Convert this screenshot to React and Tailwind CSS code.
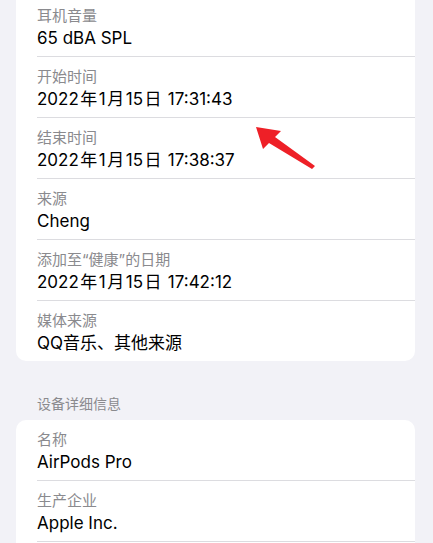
import React from "react";

const sample = [
  { label: "耳机音量", value: "65 dBA SPL" },
  { label: "开始时间", value: "2022年1月15日 17:31:43", date: true },
  { label: "结束时间", value: "2022年1月15日 17:38:37", date: true },
  { label: "来源", value: "Cheng" },
  { label: "添加至“健康”的日期", value: "2022年1月15日 17:42:12", date: true },
  { label: "媒体来源", value: "QQ音乐、其他来源" },
];

const device = [
  { label: "名称", value: "AirPods Pro" },
  { label: "生产企业", value: "Apple Inc." },
];

// iOS puts a little air between CJK and digits in dates
const spaced = (text) =>
  text.split(/([年月日])/).map((part, i) =>
    /[年月日]/.test(part) ? (
      <span key={i} className="px-[1.5px]">
        {part}
      </span>
    ) : (
      part
    )
  );

const Row = ({ label, value, date, last }) => (
  <div className="pl-[21px]">
    <div
      className={
        "pt-[10px] pb-[6px] " + (last ? "" : "border-b border-[#dcdce0]")
      }
    >
      <div className="text-[15px] leading-[20px] text-[#8a8a8e]">{label}</div>
      <div className="text-[17px] leading-[24px] text-black">
        {date ? spaced(value) : value}
      </div>
    </div>
  </div>
);

const App = () => {
  return (
    <div
      className="relative h-[543px] w-[433px] overflow-hidden bg-[#f2f2f7]"
      style={{ fontFamily: 'Inter, "Noto Sans CJK SC", sans-serif' }}
    >
      <div className="ml-[16px] mr-[18px] -mt-[4px] rounded-b-[10px] bg-white">
        {sample.map((r, i) => (
          <Row key={r.label} {...r} last={i === sample.length - 1} />
        ))}
      </div>

      <div className="pl-[37px] pt-[34px] pb-[7px] text-[14px] leading-[18px] text-[#8a8a8e]">
        设备详细信息
      </div>

      <div className="ml-[16px] mr-[18px] h-[140px] rounded-t-[10px] bg-white">
        {device.map((r) => (
          <Row key={r.label} {...r} />
        ))}
      </div>

      <svg
        className="absolute left-0 top-0"
        width="433"
        height="543"
        viewBox="0 0 433 543"
      >
        <polygon
          points="256,127 281,131 275,137 315,166 312,169 269,143 263,149"
          fill="#ee2027"
        />
      </svg>
    </div>
  );
};

export default App;
